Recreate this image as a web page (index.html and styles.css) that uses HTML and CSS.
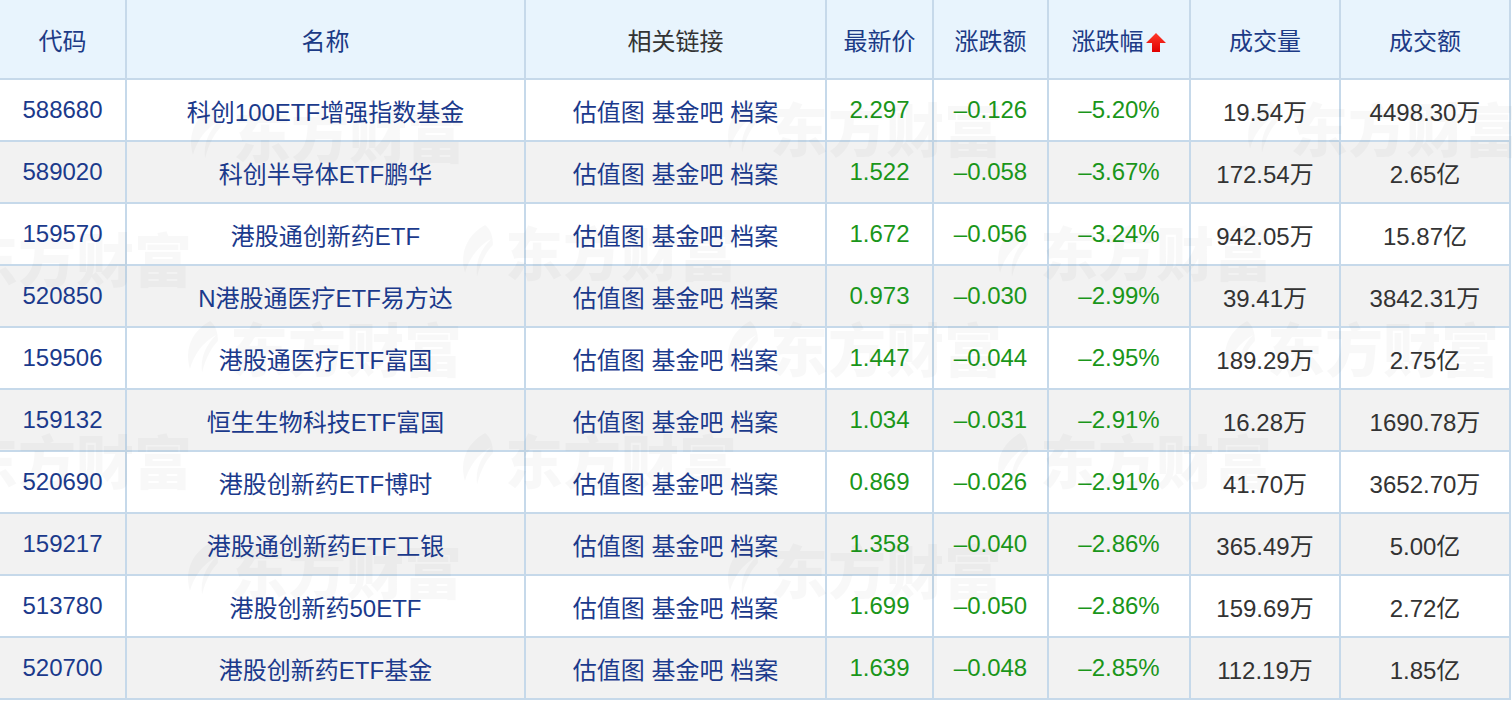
FILE: index.html
```html
<!DOCTYPE html>
<html lang="zh-CN">
<head>
<meta charset="utf-8">
<title>ETF 跌幅榜</title>
<link rel="stylesheet" href="styles.css">
</head>
<body>
<div class="wrap">
  <table class="grid">
    <colgroup>
      <col class="c1"><col class="c2"><col class="c3"><col class="c4"><col class="c5"><col class="c6"><col class="c7"><col class="c8">
    </colgroup>
    <thead>
      <tr>
        <th class="sort">代码</th>
        <th class="sort">名称</th>
        <th class="plain">相关链接</th>
        <th class="sort">最新价</th>
        <th class="sort">涨跌额</th>
        <th class="sort">涨跌幅<svg class="arrow" viewBox="0 0 22 22" width="22" height="22"><defs><linearGradient id="ag" x1="0" y1="0" x2="0" y2="1"><stop offset="0" stop-color="#ff3a2a"/><stop offset="1" stop-color="#e00000"/></linearGradient></defs><polygon points="11,2 21,12 15,12 15,21 7,21 7,12 1,12" fill="url(#ag)"/></svg></th>
        <th class="sort">成交量</th>
        <th class="sort">成交额</th>
      </tr>
    </thead>
    <tbody>
      <tr><td class="lnk">588680</td><td class="lnk">科创100ETF增强指数基金</td><td class="lnk">估值图 基金吧 档案</td><td class="dn">2.297</td><td class="dn">–0.126</td><td class="dn">–5.20%</td><td>19.54万</td><td>4498.30万</td></tr>
      <tr><td class="lnk">589020</td><td class="lnk">科创半导体ETF鹏华</td><td class="lnk">估值图 基金吧 档案</td><td class="dn">1.522</td><td class="dn">–0.058</td><td class="dn">–3.67%</td><td>172.54万</td><td>2.65亿</td></tr>
      <tr><td class="lnk">159570</td><td class="lnk">港股通创新药ETF</td><td class="lnk">估值图 基金吧 档案</td><td class="dn">1.672</td><td class="dn">–0.056</td><td class="dn">–3.24%</td><td>942.05万</td><td>15.87亿</td></tr>
      <tr><td class="lnk">520850</td><td class="lnk">N港股通医疗ETF易方达</td><td class="lnk">估值图 基金吧 档案</td><td class="dn">0.973</td><td class="dn">–0.030</td><td class="dn">–2.99%</td><td>39.41万</td><td>3842.31万</td></tr>
      <tr><td class="lnk">159506</td><td class="lnk">港股通医疗ETF富国</td><td class="lnk">估值图 基金吧 档案</td><td class="dn">1.447</td><td class="dn">–0.044</td><td class="dn">–2.95%</td><td>189.29万</td><td>2.75亿</td></tr>
      <tr><td class="lnk">159132</td><td class="lnk">恒生生物科技ETF富国</td><td class="lnk">估值图 基金吧 档案</td><td class="dn">1.034</td><td class="dn">–0.031</td><td class="dn">–2.91%</td><td>16.28万</td><td>1690.78万</td></tr>
      <tr><td class="lnk">520690</td><td class="lnk">港股创新药ETF博时</td><td class="lnk">估值图 基金吧 档案</td><td class="dn">0.869</td><td class="dn">–0.026</td><td class="dn">–2.91%</td><td>41.70万</td><td>3652.70万</td></tr>
      <tr><td class="lnk">159217</td><td class="lnk">港股通创新药ETF工银</td><td class="lnk">估值图 基金吧 档案</td><td class="dn">1.358</td><td class="dn">–0.040</td><td class="dn">–2.86%</td><td>365.49万</td><td>5.00亿</td></tr>
      <tr><td class="lnk">513780</td><td class="lnk">港股创新药50ETF</td><td class="lnk">估值图 基金吧 档案</td><td class="dn">1.699</td><td class="dn">–0.050</td><td class="dn">–2.86%</td><td>159.69万</td><td>2.72亿</td></tr>
      <tr><td class="lnk">520700</td><td class="lnk">港股创新药ETF基金</td><td class="lnk">估值图 基金吧 档案</td><td class="dn">1.639</td><td class="dn">–0.048</td><td class="dn">–2.85%</td><td>112.19万</td><td>1.85亿</td></tr>
    </tbody>
  </table>
  <div class="wm w1"><svg viewBox="0 0 40 56" width="40" height="56"><path d="M30 2 C12 12 4 30 10 50 C14 36 22 24 36 16 C26 26 20 38 22 54 C26 38 32 28 38 22 C38 14 36 6 30 2 Z" fill="currentColor"/></svg><span>东方财富</span></div>
  <div class="wm w2"><svg viewBox="0 0 40 56" width="40" height="56"><path d="M30 2 C12 12 4 30 10 50 C14 36 22 24 36 16 C26 26 20 38 22 54 C26 38 32 28 38 22 C38 14 36 6 30 2 Z" fill="currentColor"/></svg><span>东方财富</span></div>
  <div class="wm w3"><svg viewBox="0 0 40 56" width="40" height="56"><path d="M30 2 C12 12 4 30 10 50 C14 36 22 24 36 16 C26 26 20 38 22 54 C26 38 32 28 38 22 C38 14 36 6 30 2 Z" fill="currentColor"/></svg><span>东方财富</span></div>
  <div class="wm w4"><svg viewBox="0 0 40 56" width="40" height="56"><path d="M30 2 C12 12 4 30 10 50 C14 36 22 24 36 16 C26 26 20 38 22 54 C26 38 32 28 38 22 C38 14 36 6 30 2 Z" fill="currentColor"/></svg><span>东方财富</span></div>
  <div class="wm w5"><svg viewBox="0 0 40 56" width="40" height="56"><path d="M30 2 C12 12 4 30 10 50 C14 36 22 24 36 16 C26 26 20 38 22 54 C26 38 32 28 38 22 C38 14 36 6 30 2 Z" fill="currentColor"/></svg><span>东方财富</span></div>
  <div class="wm w6"><svg viewBox="0 0 40 56" width="40" height="56"><path d="M30 2 C12 12 4 30 10 50 C14 36 22 24 36 16 C26 26 20 38 22 54 C26 38 32 28 38 22 C38 14 36 6 30 2 Z" fill="currentColor"/></svg><span>东方财富</span></div>
  <div class="wm w7"><svg viewBox="0 0 40 56" width="40" height="56"><path d="M30 2 C12 12 4 30 10 50 C14 36 22 24 36 16 C26 26 20 38 22 54 C26 38 32 28 38 22 C38 14 36 6 30 2 Z" fill="currentColor"/></svg><span>东方财富</span></div>
  <div class="wm w8"><svg viewBox="0 0 40 56" width="40" height="56"><path d="M30 2 C12 12 4 30 10 50 C14 36 22 24 36 16 C26 26 20 38 22 54 C26 38 32 28 38 22 C38 14 36 6 30 2 Z" fill="currentColor"/></svg><span>东方财富</span></div>
  <div class="wm w9"><svg viewBox="0 0 40 56" width="40" height="56"><path d="M30 2 C12 12 4 30 10 50 C14 36 22 24 36 16 C26 26 20 38 22 54 C26 38 32 28 38 22 C38 14 36 6 30 2 Z" fill="currentColor"/></svg><span>东方财富</span></div>
  <div class="wm w10"><svg viewBox="0 0 40 56" width="40" height="56"><path d="M30 2 C12 12 4 30 10 50 C14 36 22 24 36 16 C26 26 20 38 22 54 C26 38 32 28 38 22 C38 14 36 6 30 2 Z" fill="currentColor"/></svg><span>东方财富</span></div>
  <div class="wm w11"><svg viewBox="0 0 40 56" width="40" height="56"><path d="M30 2 C12 12 4 30 10 50 C14 36 22 24 36 16 C26 26 20 38 22 54 C26 38 32 28 38 22 C38 14 36 6 30 2 Z" fill="currentColor"/></svg><span>东方财富</span></div>
  <div class="wm w12"><svg viewBox="0 0 40 56" width="40" height="56"><path d="M30 2 C12 12 4 30 10 50 C14 36 22 24 36 16 C26 26 20 38 22 54 C26 38 32 28 38 22 C38 14 36 6 30 2 Z" fill="currentColor"/></svg><span>东方财富</span></div>
  <div class="wm w13"><svg viewBox="0 0 40 56" width="40" height="56"><path d="M30 2 C12 12 4 30 10 50 C14 36 22 24 36 16 C26 26 20 38 22 54 C26 38 32 28 38 22 C38 14 36 6 30 2 Z" fill="currentColor"/></svg><span>东方财富</span></div>
  <div class="wm w14"><svg viewBox="0 0 40 56" width="40" height="56"><path d="M30 2 C12 12 4 30 10 50 C14 36 22 24 36 16 C26 26 20 38 22 54 C26 38 32 28 38 22 C38 14 36 6 30 2 Z" fill="currentColor"/></svg><span>东方财富</span></div>
  <div class="wm w15"><svg viewBox="0 0 40 56" width="40" height="56"><path d="M30 2 C12 12 4 30 10 50 C14 36 22 24 36 16 C26 26 20 38 22 54 C26 38 32 28 38 22 C38 14 36 6 30 2 Z" fill="currentColor"/></svg><span>东方财富</span></div>
</div>
</body>
</html>
```
FILE: styles.css
```css
html, body {
  margin: 0;
  padding: 0;
  background: #ffffff;
}
body {
  width: 1512px;
  height: 702px;
  overflow: hidden;
  font-family: "Liberation Sans", "Noto Sans CJK SC", sans-serif;
}
.wrap {
  position: relative;
  width: 1512px;
  height: 702px;
  overflow: hidden;
}
.grid {
  border-collapse: separate;
  border-spacing: 0;
  table-layout: fixed;
  width: 1511px;
  font-size: 24px;
}
.c1 { width: 127px; }
.c2 { width: 399px; }
.c3 { width: 301px; }
.c4 { width: 107px; }
.c5 { width: 115px; }
.c6 { width: 142px; }
.c7 { width: 150px; }
.c8 { width: 170px; }
.grid th,
.grid td {
  border-right: 2px solid #c6d9ea;
  border-bottom: 2px solid #c6d9ea;
  padding: 0;
  text-align: center;
  white-space: nowrap;
  font-weight: normal;
}
.grid th {
  height: 78px;
  background: #e8f4fd;
  color: #1c3b86;
}
.grid th.plain {
  color: #333333;
}
.grid td {
  height: 60px;
  color: #333333;
}
.grid tbody tr:nth-child(even) td {
  background: #f2f2f2;
}
.grid td.lnk {
  color: #1b3a8c;
}
.grid td.dn {
  color: #1a961a;
}
.arrow {
  vertical-align: -3px;
  margin-left: 1px;
}
.wm {
  position: absolute;
  display: flex;
  align-items: center;
  gap: 10px;
  white-space: nowrap;
  color: rgba(0, 0, 0, 0.028);
  font-family: "Noto Sans CJK SC", sans-serif;
  font-weight: 900;
  font-size: 58px;
  line-height: 1;
  pointer-events: none;
}
.w1 { left: -310px; top: 100px; }
.w2 { left: 183px; top: 104px; }
.w3 { left: 720px; top: 98px; }
.w4 { left: 1240px; top: 98px; }
.w5 { left: -90px; top: 228px; }
.w6 { left: 455px; top: 222px; }
.w7 { left: 990px; top: 222px; }
.w8 { left: 180px; top: 318px; }
.w9 { left: 720px; top: 318px; }
.w10 { left: 1217px; top: 318px; }
.w11 { left: -90px; top: 430px; }
.w12 { left: 455px; top: 430px; }
.w13 { left: 990px; top: 430px; }
.w14 { left: 180px; top: 540px; }
.w15 { left: 720px; top: 540px; }
```
